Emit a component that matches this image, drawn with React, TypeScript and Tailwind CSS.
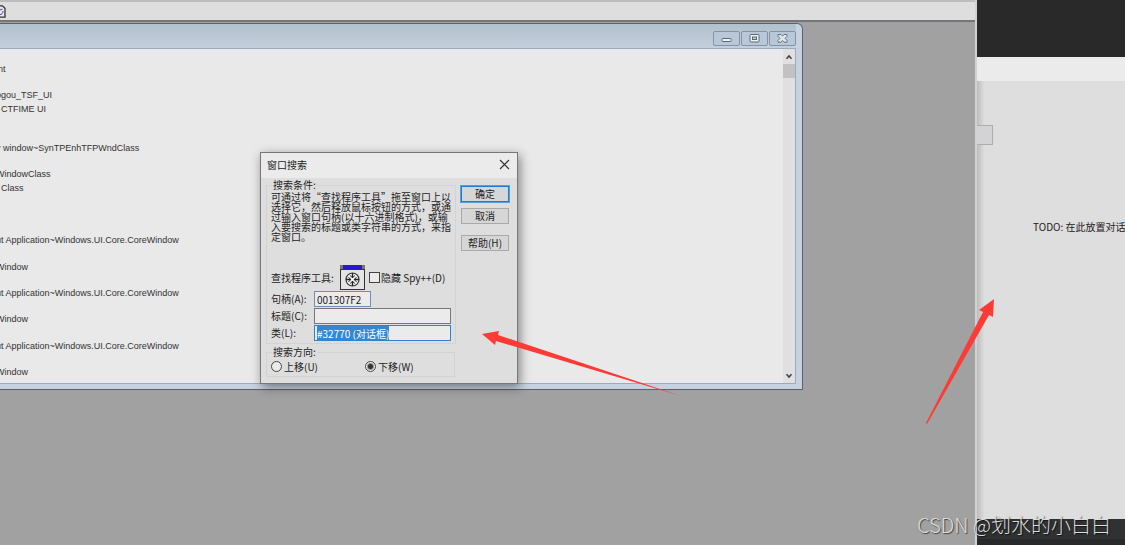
/**
 * Desktop view of the Spy++ window list with its "Find Window" dialog open
 * and the inspected dialog application peeking out on the right.
 */

import { useEffect, useRef, useState } from 'react';

type Direction = 'up' | 'down';

// Empty entries are rows whose text is scrolled out of view
const WINDOW_ROWS = [
  'int',
  '',
  'ogou_TSF_UI',
  '  CTFIME UI',
  '',
  '',
  'y window~SynTPEnhTFPWndClass',
  '',
  'WindowClass',
  '  Class',
  '',
  '',
  '',
  'ut Application~Windows.UI.Core.CoreWindow',
  '',
  'Window',
  '',
  'ut Application~Windows.UI.Core.CoreWindow',
  '',
  'Window',
  '',
  'ut Application~Windows.UI.Core.CoreWindow',
  '',
  'Window',
];

const HELP_LINES = [
  '可通过将“查找程序工具”拖至窗口上以',
  '选择它，然后释放鼠标按钮的方式，或通',
  '过输入窗口句柄(以十六进制格式)，或输',
  '入要搜索的标题或类字符串的方式，来指',
  '定窗口。',
];

function FinderIcon() {
  return (
    <svg width="25" height="25" viewBox="0 0 25 25" className="shrink-0">
      <rect x="0.5" y="0.5" width="24" height="24" fill="#e4e4e4" stroke="#333" />
      <rect x="1" y="1" width="23" height="3" fill="#2418d8" />
      <rect x="0" y="0" width="3" height="4" fill="#77776e" />
      <rect x="22" y="0" width="3" height="4" fill="#77776e" />
      <path d="M1 4.5h23" stroke="#333" />
      <circle cx="12.5" cy="14.5" r="6.5" fill="#f2f2f2" stroke="#333" strokeWidth="1.2" />
      <path d="M12.5 8v5M12.5 16v5M6 14.500h5M14 14.500h5" stroke="#222" strokeWidth="1.4" />
      <path
        d="M10 10.500l2.500 2 2.500-2M10 18.500l2.500-2 2.500 2M8.500 12l2 2.500-2 2.500M16.500 12l-2 2.500 2 2.500"
        fill="none"
        stroke="#222"
        strokeWidth="0.9"
      />
    </svg>
  );
}

function WindowButtons() {
  const button =
    'flex h-[15px] w-[27px] items-center justify-center rounded-xs border border-[#8494a6] bg-[#b9c8d8]';
  return (
    <div className="flex gap-px">
      <button type="button" aria-label="Minimize" className={button}>
        <svg width="11" height="9" viewBox="0 0 11 9">
          <rect x="1" y="4.500" width="9" height="3" rx="0.5" fill="#eef2f5" stroke="#5f6975" />
        </svg>
      </button>
      <button type="button" aria-label="Restore" className={button}>
        <svg width="11" height="9" viewBox="0 0 11 9">
          <rect x="1" y="0.5" width="9" height="7.500" rx="1" fill="#eef2f5" stroke="#5f6975" />
          <rect x="3.500" y="3" width="4" height="2.500" fill="#b9c8d8" stroke="#5f6975" />
        </svg>
      </button>
      <button type="button" aria-label="Close" className={button}>
        <svg width="11" height="9" viewBox="0 0 11 9">
          <path
            d="M1 .5h3l1.500 1.700L7 .5h3v1.800L8 4.300l2 2v1.900H7L5.500 6.500 4 8.200H1V6.300l2-2-2-2z"
            fill="#dfe6ec"
            stroke="#5f6975"
            strokeWidth="0.9"
          />
        </svg>
      </button>
    </div>
  );
}

function ScrollBar() {
  return (
    <div className="flex w-3 flex-col items-center justify-between bg-[#e0e0e0] pb-1">
      <div className="flex w-full flex-col items-center">
        <div className="flex h-[15px] items-center">
          <svg width="8" height="6" viewBox="0 0 8 6">
            <path d="M1.500 4.800L4 2l2.500 2.800" fill="none" stroke="#444" strokeWidth="1.6" />
          </svg>
        </div>
        <div className="h-[14px] w-full bg-[#c2c2c2]" />
      </div>
      <svg width="8" height="6" viewBox="0 0 8 6">
        <path d="M1.500 1.200L4 4l2.500-2.800" fill="none" stroke="#444" strokeWidth="1.6" />
      </svg>
    </div>
  );
}

function WindowList() {
  return (
    <section className="mt-px mr-[172px] rounded-tr-md border-t border-r border-b border-[#59636d] bg-[#c6d2e0] pr-1.5 pb-[5px]">
      <div className="flex h-6 items-center justify-end bg-linear-to-b from-[#b3c0cd] to-[#c3cfdb] pt-1">
        <WindowButtons />
      </div>
      <div className="flex h-[336px] overflow-hidden border-y border-r border-[#9aabbe] bg-[#e9e9e9]">
        <ul className="-ml-1 grid flex-1 grid-rows-[repeat(24,minmax(0,1fr))] pt-3.5 pb-1 font-['Liberation_Sans',sans-serif] text-[9px] leading-[13px] whitespace-pre text-[#333]">
          {WINDOW_ROWS.map((row, index) => (
            <li key={index}>{row}</li>
          ))}
        </ul>
        <ScrollBar />
      </div>
    </section>
  );
}

function FindWindowDialog() {
  const [hidden, setHidden] = useState(false);
  const [handle, setHandle] = useState('001307F2');
  const [caption, setCaption] = useState('');
  const [className, setClassName] = useState('#32770 (对话框)');
  const [direction, setDirection] = useState<Direction>('down');
  const classRef = useRef<HTMLInputElement>(null);

  useEffect(() => {
    classRef.current?.focus();
    classRef.current?.select();
  }, []);

  const field = 'h-4 border bg-[#ebebeb] px-0.5 outline-none';
  const button = 'h-4 w-12 border bg-[#d6d6d6]';

  return (
    <div
      role="dialog"
      aria-labelledby="find-title"
      className="absolute top-[152px] left-[260px] w-[258px] border border-[#777] bg-[#dedede] font-['Noto_Sans_CJK_SC',sans-serif] text-[10px] leading-[10px] whitespace-nowrap text-[#222] shadow-[2px_3px_10px_rgba(0,0,0,0.45)]"
    >
      <header className="flex h-[25px] items-center justify-between bg-[#ebebeb] px-1.5 pb-0.5">
        <h1 id="find-title">窗口搜索</h1>
        <button type="button" aria-label="关闭">
          <svg width="12" height="11" viewBox="0 0 12 11">
            <path d="M1 1l9 9M10 1l-9 9" stroke="#333" strokeWidth="1.100" />
          </svg>
        </button>
      </header>

      <form className="flex gap-1.5 pr-2 pb-1.5 pl-[5px]" onSubmit={(e) => e.preventDefault()}>
        <div className="min-w-0 flex-1">
          <fieldset className="mt-0.5 border border-[#d3d3d3] px-1 pb-0.5">
            <legend className="ml-px px-px">搜索条件:</legend>
            <p className="mt-0.5">
              {HELP_LINES.map((line) => (
                <span key={line} className="block">
                  {line}
                </span>
              ))}
            </p>
            <div className="mt-[23px] flex items-center">
              <span className="w-[69px]">查找程序工具:</span>
              <FinderIcon />
              <label className="ml-1 flex items-center gap-px">
                <input
                  type="checkbox"
                  checked={hidden}
                  onChange={(e) => setHidden(e.target.checked)}
                  className="size-[11px] appearance-none border border-[#444] bg-[#ebebeb]"
                />
                隐藏 Spy++(D)
              </label>
            </div>
            <div className="mt-px grid grid-cols-[43px_1fr] items-center gap-y-px">
              <label htmlFor="handle">句柄(A):</label>
              <input
                id="handle"
                value={handle}
                onChange={(e) => setHandle(e.target.value)}
                className={`${field} w-[57px] border-[#6f8fb5]`}
              />
              <label htmlFor="caption">标题(C):</label>
              <input
                id="caption"
                value={caption}
                onChange={(e) => setCaption(e.target.value)}
                className={`${field} w-full border-[#777]`}
              />
              <label htmlFor="class-name">类(L):</label>
              <input
                id="class-name"
                ref={classRef}
                value={className}
                onChange={(e) => setClassName(e.target.value)}
                className={`${field} w-full border-[#2f82cf] selection:bg-[#3187da] selection:text-white`}
              />
            </div>
          </fieldset>

          <fieldset className="mt-[3px] border border-[#d3d3d3] px-1 pb-1">
            <legend className="ml-px px-px">搜索方向:</legend>
            <div className="mt-1 flex">
              <label className="flex w-[94px] items-center gap-0.5">
                <input
                  type="radio"
                  name="direction"
                  checked={direction === 'up'}
                  onChange={() => setDirection('up')}
                  className="size-[11px] appearance-none rounded-full border border-[#444] bg-[#ebebeb]"
                />
                上移(U)
              </label>
              <label className="flex items-center gap-0.5">
                <input
                  type="radio"
                  name="direction"
                  checked={direction === 'down'}
                  onChange={() => setDirection('down')}
                  className="size-[11px] appearance-none rounded-full border border-[#444] bg-[#ebebeb] checked:bg-[radial-gradient(#333_2px,transparent_4px)]"
                />
                下移(W)
              </label>
            </div>
          </fieldset>
        </div>

        <div className="mt-2 flex flex-col gap-1.5">
          <button type="submit" className={`${button} border-[#1f7ad1] ring-1 ring-[#5c9ddc]`}>
            确定
          </button>
          <button type="button" className={`${button} border-[#a9a9a9]`}>
            取消
          </button>
          <button type="button" className={`${button} mt-[5px] border-[#a9a9a9]`}>
            帮助(H)
          </button>
        </div>
      </form>
    </div>
  );
}

function TargetApplication() {
  return (
    <aside className="flex w-[148px] flex-col overflow-hidden bg-[#292929]">
      <div className="mt-[57px] h-6 bg-[#ebebeb]" />
      <div className="flex-1 bg-[#dedede] bg-linear-to-r from-black/15 to-transparent to-5% pt-11 font-['Noto_Sans_CJK_SC',sans-serif] text-[10px] leading-4 whitespace-nowrap text-[#222]">
        <button
          type="button"
          aria-label="按钮"
          className="block h-5 w-4 border border-l-0 border-[#adadad] bg-[#d3d3d6]"
        />
        <p className="mt-[74px] ml-14">TODO: 在此放置对话框控件。</p>
      </div>
      <div className="h-[26px] bg-[#2f3132] pt-5">
        <div className="h-full bg-[#27292a]" />
      </div>
    </aside>
  );
}

function Arrows() {
  return (
    <>
      <svg
        className="absolute top-[330px] left-[482px]"
        width="200"
        height="67"
        viewBox="0 0 200 67"
        fill="#fd3b36"
      >
        <path d="M0 4L17 1L16 5L199 66L14 11L13 15z" />
      </svg>
      <svg
        className="absolute top-[299px] left-[925px]"
        width="70"
        height="126"
        viewBox="0 0 70 126"
        fill="#fd3b36"
      >
        <path d="M69 0L68 18L64 16L2 125L1 124L58 13L54 11z" />
      </svg>
    </>
  );
}

export default function App() {
  return (
    <div className="relative flex min-h-screen overflow-hidden">
      <main className="min-w-0 flex-1 border-r-2 border-[#d2d2d2] bg-[#a1a1a1]">
        <div className="flex h-[22px] items-center border-t-2 border-b-2 border-t-[#bdbdbd] border-b-[#75757a] bg-[#dedede]">
          <svg width="6" height="13" viewBox="0 0 6 13">
            <path d="M0 .8h2.500l2.500 2.500v8.900H0" fill="#e6e6ee" stroke="#333" strokeWidth="1.300" />
            <path d="M0 5l2.500-1M0 9.500c2 0 3-1.500 3-3.500" fill="none" stroke="#4a4a94" />
          </svg>
        </div>
        <WindowList />
      </main>
      <TargetApplication />
      <FindWindowDialog />
      <Arrows />
      <p className="absolute right-3.5 bottom-1.5 font-['Noto_Sans_CJK_SC',sans-serif] text-[20px] leading-7 font-light text-[#dcdcdc] text-shadow-[1px_1px_1px_rgba(0,0,0,0.6)]">
        CSDN @划水的小白白
      </p>
    </div>
  );
}
